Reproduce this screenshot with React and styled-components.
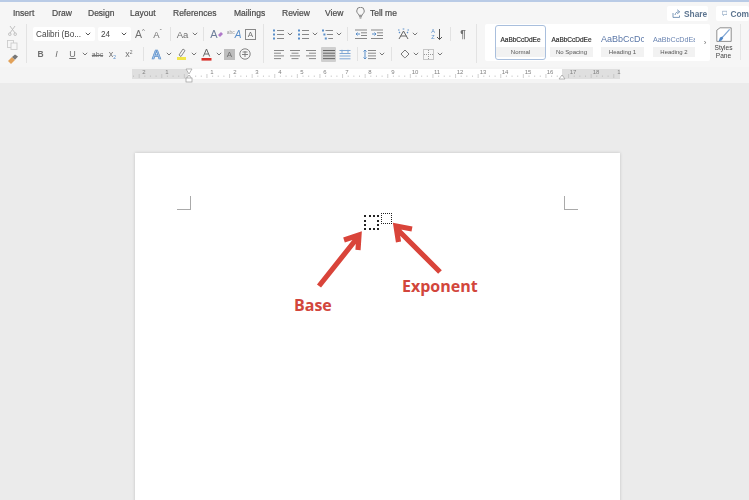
import React from "react";
import styled, { createGlobalStyle } from "styled-components";

const Global = createGlobalStyle`
  html, body { margin: 0; padding: 0; height: 500px; overflow: hidden; background: #ebebeb; }
  #root { height: 500px; }
  * { box-sizing: border-box; }
`;
const Shell = styled.div`
  width: 749px; height: 500px; overflow: hidden; display: flex; flex-direction: column;
  font-family: "Liberation Sans", Arial, sans-serif; background: #ebebeb; color: #444;
`;
const Chrome = styled.div`flex: none; display: flex; flex-direction: column; filter: blur(0.35px);`;
const TopStrip = styled.div`height: 2px; background: #b9cbe6; flex: none;`;
const TabBar = styled.div`
  height: 21px; flex: none; background: #f6f6f6; display: flex; align-items: center; position: relative;
  font-size: 8.5px; font-weight: 500; color: #4a4a4a; padding-left: 13px;
`;
const Tab = styled.span`width: ${p => p.$w}px; flex: none; white-space: nowrap; -webkit-text-stroke: 0.2px #4a4a4a; padding-left: ${p => p.$pl || 0}px;`;
const TabActions = styled.div`margin-left: auto; display: flex; gap: 8px; padding-top: 2px;`;
const ActionBtn = styled.div`
  height: 15px; width: ${p => p.$w}px; background: #fff; display: flex; align-items: center; gap: 3px; padding-left: ${p => p.$pl}px;
  font-size: 8.4px; color: #5d7590; font-weight: 700; overflow: hidden; white-space: nowrap; flex: none; border-radius: 2px;
`;
const Ribbon = styled.div`height: 44px; flex: none; background: #f6f6f6; display: flex; align-items: stretch; padding-top: 1px;`;
const Group = styled.div`
  width: ${p => p.$w}px; flex: none; display: flex; flex-direction: column; padding-left: ${p => p.$pl || 0}px;
  border-right: 1px solid #e3e3e3; margin: 0 0 4px;
`;
const ClipColumn = styled.div`display: flex; flex-direction: column; align-items: center; gap: 4px; padding: 2px 0 0 0; width: 25px;`;
const Row = styled.div`height: 20px; display: flex; align-items: center; flex: none;`;
const Slot = styled.div`
  width: ${p => p.$w}px; height: ${p => p.$on ? 15 : 16}px; flex: none; display: flex; align-items: center; justify-content: center;
  font-size: ${p => p.$fs || 9}px; color: #707070; font-weight: ${p => p.$bold ? 700 : 400};
  font-style: ${p => p.$italic ? "italic" : "normal"};
  background: ${p => p.$on ? "#cfcfcf" : "transparent"}; border-radius: 1px;
`;
const Mini = styled.span`font-size: ${p => p.$fs || 6}px; color: ${p => p.$c || "inherit"}; margin-top: ${p => p.$mt || 0}px; margin-left: ${p => p.$ml || 0}px; font-style: ${p => p.$italic ? "italic" : "normal"};`;
const BoxedA = styled.span`border: 1px solid #888; padding: 0 2px; line-height: 9px;`;
const ShadedA = styled.span`background: #bdbdbd; padding: 0 2.5px; line-height: 11px; font-size: 8px;`;
const EffectA = styled.span`color: #a9c6ea; -webkit-text-stroke: .7px #5b8fc9;`;
const SortLetters = styled.span`order: -1; margin-right: 1px; font-size: 5.5px; line-height: 6px; color: #5b8fc9; text-align: center;`;
const Divider = styled.div`width: ${p => p.$w}px; height: 14px; flex: none; display: flex; justify-content: center; &::after { content: ""; width: 1px; background: #e2e2e2; }`;
const Select = styled.div`
  width: ${p => p.$w}px; height: 14px; margin-right: ${p => p.$mr || 0}px; background: #fff; flex: none; display: flex; align-items: center; justify-content: space-between;
  font-size: 8.2px; padding: 0 4px 0 3px; color: #444; border-radius: 2px; white-space: nowrap;
`;
const Gallery = styled.div`
  width: 225px; height: 37px; margin: 0 0 0 8px; background: #fff; flex: none; display: flex; align-items: center; padding-left: 10px; border-radius: 2px;
`;
const StyleCard = styled.div`
  width: ${p => p.$w}px; height: 35px; margin-left: ${p => p.$ml || 0}px; flex: none; display: flex; flex-direction: column; align-items: center; justify-content: space-between;
  border: 1px solid ${p => p.$on ? "#a9bfdd" : "transparent"}; border-radius: 3px; padding: 8px 0 2px; overflow: hidden;
  background: #fff;
`;
const Sample = styled.div`
  font-size: ${p => p.$fs || 6.5}px; line-height: 11px; color: ${p => p.$c || "#333"}; white-space: nowrap; width: 100%; text-align: center;
  -webkit-text-stroke: ${p => p.$heavy ? "0.2px" : "0"};
`;
const CardLabel = styled.div`
  width: 100%; height: 10px; line-height: 10px; background: #f2f2f2; font-size: 6px; color: #555; text-align: center;
`;
const PaneBtn = styled.div`width: 31px; height: 36px; flex: none; display: flex; flex-direction: column; align-items: center; padding: 3px 3px 0 0; border-right: 1px solid #e6e6e6;`;
const PaneLabel = styled.div`font-size: 6.6px; line-height: 8px; text-align: center; color: #444; margin-top: 1px;`;
const RulerBar = styled.div`height: 16px; flex: none; background: #f4f4f4; padding: 1px 0 0 132px;`;
const RulerSvg = styled.svg`display: block;`;
const Workspace = styled.div`flex: 1; background: #ebebeb; padding: 70px 0 0 135px; min-height: 0;`;
const Page = styled.div`
  width: 485px; height: 400px; background: #fff; position: relative; box-shadow: 0 0 3px rgba(0,0,0,.18);
  padding: 43px 42px 0;
`;
const CropRow = styled.div`display: flex; justify-content: space-between;`;
const Crop = styled.div`
  width: 14px; height: 14px; border-bottom: 1px solid #aaa;
  ${p => p.$side === "left" ? "border-right: 1px solid #aaa;" : "border-left: 1px solid #aaa;"}
`;
const PlaceBox = styled.div`
  position: absolute; left: ${p => p.$x}px; top: ${p => p.$y}px; width: ${p => p.$s}px; height: ${p => p.$s}px;
  border: ${p => p.$b}px dotted #222;
`;
const Annotation = styled.svg`position: absolute; left: 0; top: 0; width: 485px; height: 347px; filter: blur(0.3px);`;
const Callout = styled.div`
  position: absolute; left: ${p => p.$x}px; top: ${p => p.$y}px; font-family: "Open Sans", sans-serif; font-weight: 700; font-size: 16px; line-height: 20px; color: #d2463c; white-space: nowrap;
`;

const Chev = ({ c = "#777" }) => (
  <svg width="6" height="4" viewBox="0 0 6 4" fill="none"><path d="M.8.8 3 3l2.2-2.2" stroke={c} strokeWidth="1" /></svg>
);
const Ic = ({ w = 12, h = 12, children }) => (
  <svg width={w} height={h} viewBox={`0 0 ${w} ${h}`} fill="none" strokeWidth="1" stroke="#777">{children}</svg>
);
const Lines = ({ rows, color = "#888" }) => (
  <Ic w={12} h={11}>{rows.map(([x1, x2], i) => <path key={i} d={`M${x1} ${1.5 + i * 2.7}H${x2}`} stroke={color} />)}</Ic>
);
const ListIcon = ({ dot = "#5b8fc9", dashed }) => (
  <Ic w={11} h={11}>
    {[1.5, 5.5, 9.5].map((y, i) => (
      <g key={y}>
        <rect x={dashed ? i * 1.4 : 0} y={y - 1} width="2" height="2" fill={dot} stroke="none" />
        <path d={`M${dashed ? 3.5 + i * 1.4 : 4} ${y}H11`} stroke="#888" />
      </g>
    ))}
  </Ic>
);
const Indent = ({ flip }) => (
  <Ic w={12} h={11}>
    <path d="M0 1H12M6 3.8H12M6 6.5H12M0 9.5H12" stroke="#888" />
    <path d={flip ? "M5 5H1M2.5 3.5 1 5l1.500 1.500" : "M1 5H5M3.500 3.500 5 5 3.500 6.500"} stroke="#5b8fc9" />
  </Ic>
);

const tabs = [["Insert", 39], ["Draw", 36], ["Design", 42], ["Layout", 43], ["References", 61], ["Mailings", 48], ["Review", 43], ["View", 30]];
const nums = [[144, "2"], [167, "1"], [212, "1"], [235, "2"], [257, "3"], [280, "4"], [302, "5"], [325, "6"], [347, "7"], [370, "8"], [393, "9"], [415, "10"], [437, "11"], [460, "12"], [483, "13"], [505, "14"], [528, "15"], [550, "16"], [573, "17"], [596, "18"], [619, "1"]];
const ticks = Array.from({ length: 86 }, (_, i) => 133.5 + i * 5.65);

const Ruler = () => (
  <RulerSvg width="490" height="15" viewBox="132 67 490 15">
    <rect x="132" y="68" width="488" height="10" fill="#fff" />
    <rect x="132" y="68" width="56" height="10" fill="#dfdfdf" />
    <rect x="562" y="68" width="58" height="10" fill="#dfdfdf" />
    {ticks.map((x, i) => <path key={i} d={`M${x} ${i % 4 === 1 ? 73 : 74.5}V${i % 4 === 1 ? 77 : 76}`} stroke="#bbb" strokeWidth=".7" />)}
    {nums.map(([x, t]) => <text key={x} x={x} y="73" fontSize="6" fill="#808080" textAnchor="middle" fontFamily="Liberation Sans, sans-serif">{t}</text>)}
    <path d="M186 68h6l-3 5zM186 78l3-4 3 4z" fill="#fff" stroke="#999" strokeWidth=".7" />
    <rect x="186" y="77" width="6" height="4" fill="#fff" stroke="#999" strokeWidth=".7" />
    <path d="M559 78l3-4 3 4z" fill="#fff" stroke="#999" strokeWidth=".7" />
  </RulerSvg>
);

export default function App() {
  return (
    <Shell>
      <Global />
      <Chrome>
        <TopStrip />
        <TabBar>
          {tabs.map(([t, w]) => <Tab key={t} $w={w}>{t}</Tab>)}
          <Slot $w={11}>
            <svg width="9" height="12" viewBox="0 0 9 12" fill="none" stroke="#666" strokeWidth=".8"><path d="M2.800 8.300C2.600 6.800.7 6 .7 4a3.800 3.800 0 0 1 7.600 0c0 2-1.900 2.800-2.100 4.300zM3 9.700h3M3.600 11h1.800" /></svg>
          </Slot>
          <Tab $w={40} $pl={4}>Tell me</Tab>
          <TabActions>
            <ActionBtn $w={41} $pl={5}>
              <svg width="9" height="9" viewBox="0 0 9 9" fill="none" stroke="#6c8cb0" strokeWidth=".9"><path d="M1 4v4.400h6.500V6.500M3 6c.3-2 1.700-3.200 3.700-3.200M5.200.8l2.600 2-2.600 2" /></svg>
              Share
            </ActionBtn>
            <ActionBtn $w={33} $pl={6}>
              <svg width="9" height="9" viewBox="0 0 9 9" fill="none" stroke="#6c8cb0" strokeWidth=".9"><path d="M.6.8h7.800v5.400H4L2.400 8V6.200H.6z" /></svg>
              Com
            </ActionBtn>
          </TabActions>
        </TabBar>
        <Ribbon>
          <Group $w={27}>
            <ClipColumn>
              <svg width="9" height="10" viewBox="0 0 9 10" fill="none" stroke="#bbb" strokeWidth=".9"><path d="M2 0l5 7M7 0 2 7" /><circle cx="1.800" cy="8.200" r="1.300" /><circle cx="7.200" cy="8.200" r="1.300" /></svg>
              <svg width="11" height="10" viewBox="0 0 11 10" fill="none" stroke="#ccc" strokeWidth=".9"><rect x=".5" y=".5" width="6" height="7" /><rect x="4" y="3" width="6" height="6.500" fill="#f6f6f6" /></svg>
              <svg width="12" height="11" viewBox="0 0 12 11"><path d="M1 7l4-4 3 3-4 4z" fill="#e2a25a" /><path d="M5 3l3-2.400 3 2-3 3.200z" fill="#777" /></svg>
            </ClipColumn>
          </Group>
          <Group $w={237} $pl={6}>
            <Row>
              <Select $w={62} $mr={3}>Calibri (Bo...<Chev c="#555" /></Select>
              <Select $w={33}>24<Chev c="#555" /></Select>
              <Slot $w={18} $fs={10.5}>A<Mini $mt={-6}>^</Mini></Slot>
              <Slot $w={17} $fs={9.5}>A<Mini $mt={-6}>ˇ</Mini></Slot>
              <Divider $w={8} />
              <Slot $w={17} $fs={9.5}>Aa</Slot>
              <Slot $w={8}><Chev /></Slot>
              <Divider $w={9} />
              <Slot $w={17} $fs={11}><Mini $fs={11} $c="#6e7f9a">A</Mini><svg width="5" height="5" viewBox="0 0 5 5"><path d="M0 3l3-3 2 2-3 3z" fill="#b079c9" /></svg></Slot>
              <Slot $w={18} $fs={5}><Mini $fs={5} $c="#999" $mt={-5}>abc</Mini><Mini $fs={10} $c="#5b8fc9" $italic>A</Mini></Slot>
              <Slot $w={15} $fs={8}><BoxedA>A</BoxedA></Slot>
            </Row>
            <Row>
              <Slot $w={15} $bold $fs={8.5}>B</Slot>
              <Slot $w={17} $italic $fs={9}>I</Slot>
              <Slot $w={15} $fs={9}><u>U</u></Slot>
              <Slot $w={10}><Chev /></Slot>
              <Slot $w={15} $fs={7}><s>abc</s></Slot>
              <Slot $w={15} $fs={9}>x<Mini $fs={5} $c="#5b8fc9" $mt={5}>2</Mini></Slot>
              <Slot $w={18} $fs={9}>x<Mini $fs={5} $mt={-5}>2</Mini></Slot>
              <Divider $w={10} />
              <Slot $w={17} $fs={13} $bold><EffectA>A</EffectA></Slot>
              <Slot $w={7}><Chev /></Slot>
              <Slot $w={18}>
                <svg width="11" height="12" viewBox="0 0 11 12"><path d="M3 7l4-6 2 1.500L5 8.500z" fill="none" stroke="#888" /><rect x="1" y="9" width="9" height="3" fill="#f2e64a" /></svg>
              </Slot>
              <Slot $w={7}><Chev /></Slot>
              <Slot $w={18}>
                <svg width="11" height="13" viewBox="0 0 11 13"><path d="M2.300 8.500 5.500 1l3.200 7.500M3.400 6h4.200" fill="none" stroke="#666" /><rect x=".5" y="10" width="10" height="2.600" fill="#d7302a" /></svg>
              </Slot>
              <Slot $w={7}><Chev /></Slot>
              <Slot $w={15}><ShadedA>A</ShadedA></Slot>
              <Slot $w={16}>
                <svg width="12" height="12" viewBox="0 0 12 12" fill="none" stroke="#777" strokeWidth=".9"><circle cx="6" cy="6" r="5.200" /><path d="M3.500 4h5M3 6.500h6M6 3v6" /></svg>
              </Slot>
            </Row>
          </Group>
          <Group $w={213} $pl={7}>
            <Row>
              <Slot $w={14}><ListIcon /></Slot>
              <Slot $w={9}><Chev /></Slot>
              <Slot $w={18}><ListIcon /></Slot>
              <Slot $w={6}><Chev /></Slot>
              <Slot $w={18}><ListIcon dashed /></Slot>
              <Slot $w={6}><Chev /></Slot>
              <Divider $w={10} />
              <Slot $w={18}><Indent flip /></Slot>
              <Slot $w={14}><Indent /></Slot>
              <Slot $w={11} />
              <Slot $w={16}>
                <svg width="13" height="12" viewBox="0 0 13 12" fill="none"><path d="M2 11 6.500 3 11 11M3.600 8h5.800" stroke="#666" /><path d="M1 2h1.500M5.700 1h1.600M10.500 2H12M2 4l1 1M11 4l-1 1" stroke="#5b8fc9" strokeWidth="1.200" /></svg>
              </Slot>
              <Slot $w={7}><Chev /></Slot>
              <Slot $w={10} />
              <Slot $w={18}>
                <svg width="7" height="13" viewBox="0 0 7 13" fill="none"><path d="M3.500 1v10.500M1 9l2.500 2.500L6 9" stroke="#555" /></svg>
                <SortLetters>A<br />Z</SortLetters>
              </Slot>
              <Divider $w={8} />
              <Slot $w={18} $bold $fs={10}>¶</Slot>
            </Row>
            <Row>
              <Slot $w={15}><Lines rows={[[1, 11], [1, 8], [1, 11], [1, 8]]} /></Slot>
              <Slot $w={18}><Lines rows={[[1, 11], [2.5, 9.5], [1, 11], [2.5, 9.5]]} /></Slot>
              <Slot $w={14}><Lines rows={[[1, 11], [4, 11], [1, 11], [4, 11]]} /></Slot>
              <Slot $w={3} />
              <Slot $w={15} $on><Lines color="#666" rows={[[0, 12], [0, 12], [0, 12], [0, 12]]} /></Slot>
              <Slot $w={18}>
                <svg width="12" height="11" viewBox="0 0 12 11" fill="none" stroke="#7fa6d4"><path d="M.5 1.500h11M.5 4.500h11M.5 7h11M.5 9.800h11M3 .8v3M9 .8v3" /></svg>
              </Slot>
              <Divider $w={6} />
              <Slot $w={19}>
                <svg width="13" height="11" viewBox="0 0 13 11" fill="none"><path d="M5 1.500h8M5 4.200h8M5 6.900h8M5 9.600h8" stroke="#888" /><path d="M2 1v9M.5 2.500 2 1l1.500 1.500M.5 8.500 2 10l1.500-1.500" stroke="#5b8fc9" /></svg>
              </Slot>
              <Slot $w={6}><Chev /></Slot>
              <Divider $w={12} />
              <Slot $w={16}>
                <svg width="11" height="10" viewBox="0 0 11 10" fill="none" stroke="#777"><path d="M1 5 5 1l4 4-3.500 3.500a1 1 0 0 1-1.200 0z" /></svg>
              </Slot>
              <Slot $w={6}><Chev /></Slot>
              <Slot $w={18}>
                <svg width="11" height="11" viewBox="0 0 11 11" fill="none" stroke="#999" strokeDasharray="1 1"><rect x=".5" y=".5" width="10" height="10" /><path d="M5.500 1v9M1 5.500h9" /></svg>
              </Slot>
              <Slot $w={6}><Chev /></Slot>
            </Row>
          </Group>
          <Gallery>
            <StyleCard $on $w={51}>
              <Sample $heavy>AaBbCcDdEe</Sample>
              <CardLabel>Normal</CardLabel>
            </StyleCard>
            <StyleCard $w={45} $ml={3}>
              <Sample $heavy>AaBbCcDdEe</Sample>
              <CardLabel>No Spacing</CardLabel>
            </StyleCard>
            <StyleCard $w={45} $ml={6}>
              <Sample $fs={9} $c="#5c78a8">AaBbCcDc</Sample>
              <CardLabel>Heading 1</CardLabel>
            </StyleCard>
            <StyleCard $w={44} $ml={7}>
              <Sample $fs={7.2} $c="#6b85b2">AaBbCcDdEε</Sample>
              <CardLabel>Heading 2</CardLabel>
            </StyleCard>
            <Slot $w={18} $fs={8}>›</Slot>
          </Gallery>
          <PaneBtn>
            <svg width="20" height="20" viewBox="0 0 20 20" fill="none"><path d="M5 1h14v17H1V4z" stroke="#666" fill="#fff" strokeWidth=".9" /><path d="M17 3 8 13" stroke="#7fa6d4" strokeWidth="1.600" /><path d="M5 13l3-1 1 2-2 3-4 1c1-1 1-3 2-5z" fill="#4f86c6" /></svg>
            <PaneLabel>Styles<br />Pane</PaneLabel>
          </PaneBtn>
        </Ribbon>
        <RulerBar><Ruler /></RulerBar>
      </Chrome>
      <Workspace>
        <Page>
          <CropRow>
            <Crop $side="left" />
            <Crop $side="right" />
          </CropRow>
          <PlaceBox $x={229} $y={62} $s={15} $b={2} />
          <PlaceBox $x={246} $y={60} $s={11} $b={1} />
          <Annotation viewBox="135 153 485 347">
            <g fill="none" stroke="#d9443a" strokeWidth="5.2" strokeLinecap="butt" strokeLinejoin="miter">
              <path d="M319 286 358 237M344 240l15-5-1 15" />
              <path d="M440 272 397 229M412 229l-16-3 2.500 16" />
            </g>
          </Annotation>
          <Callout $x={159} $y={142}>Base</Callout>
          <Callout $x={267} $y={123}>Exponent</Callout>
        </Page>
      </Workspace>
    </Shell>
  );
}
